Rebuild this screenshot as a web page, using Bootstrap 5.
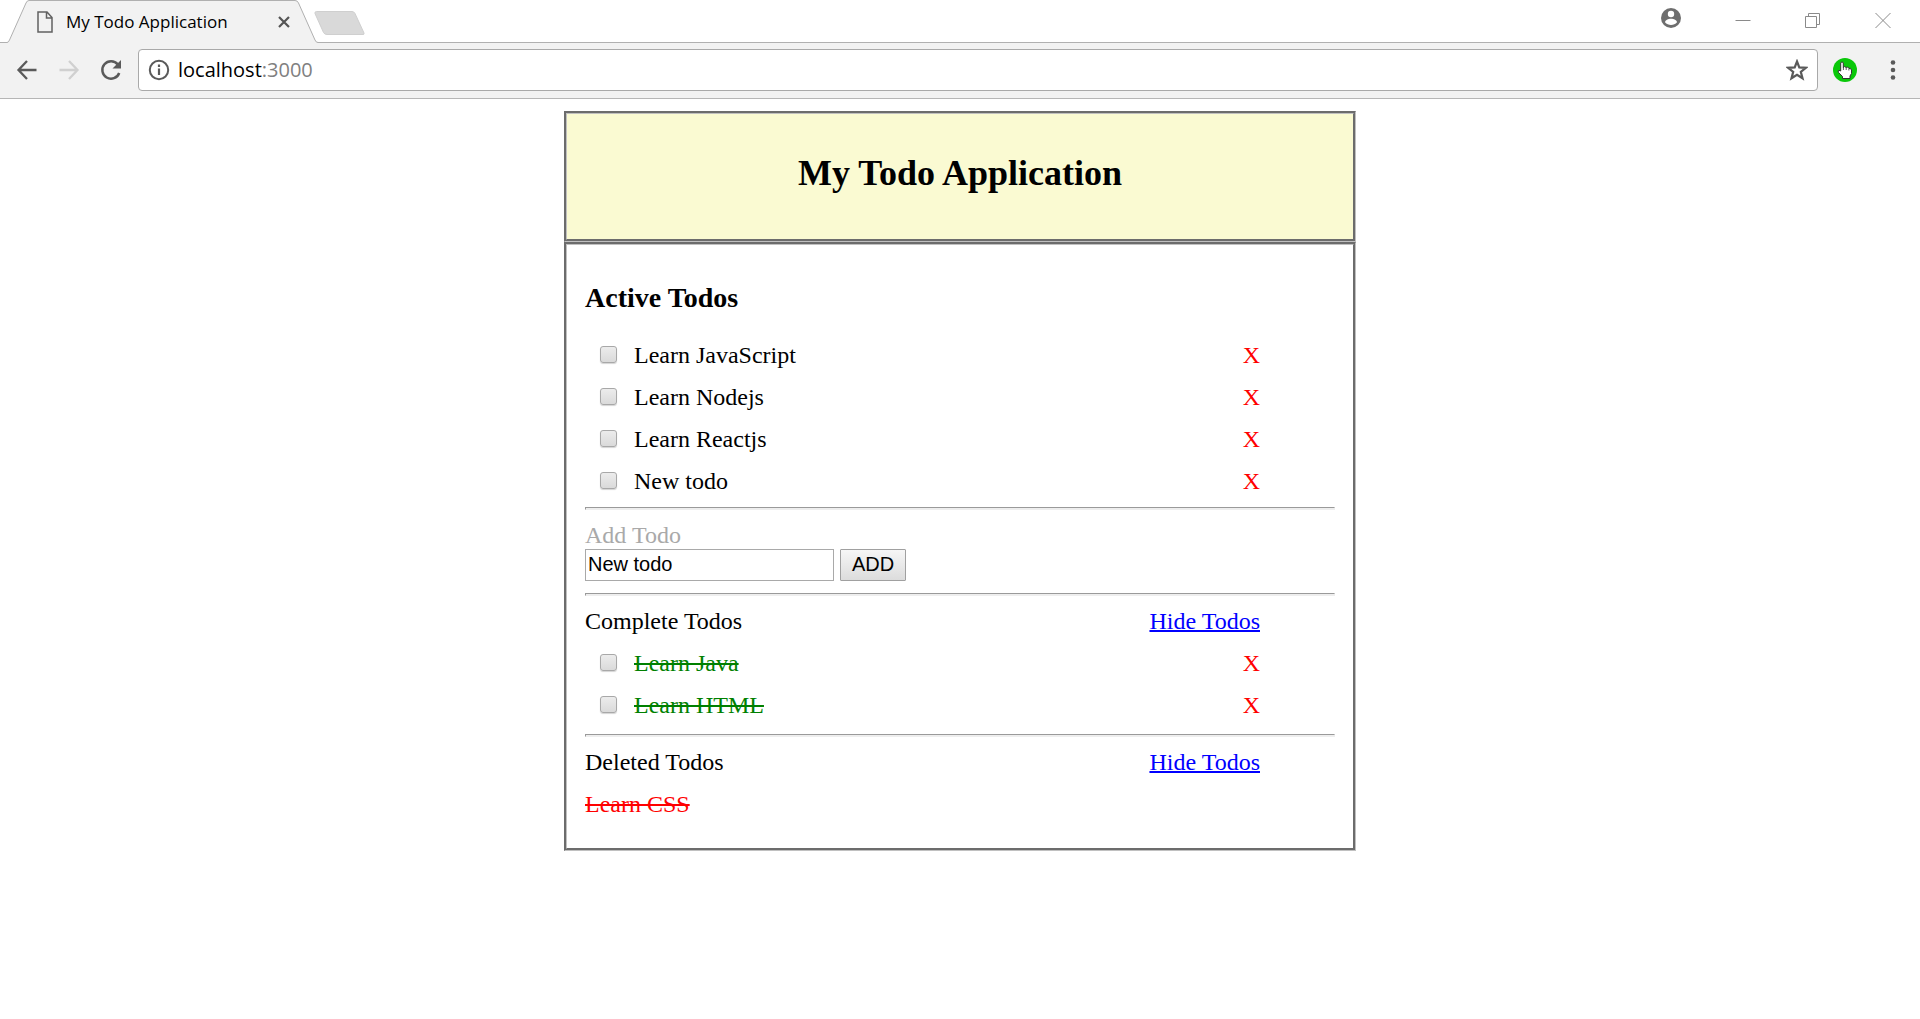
<!DOCTYPE html>
<html lang="en">
<head>
<meta charset="utf-8">
<meta name="viewport" content="width=device-width, initial-scale=1">
<title>My Todo Application</title>
<link href="https://cdn.jsdelivr.net/npm/bootstrap@5.3.0/dist/css/bootstrap.min.css" rel="stylesheet">
<style>
  body { font-family: "Liberation Serif", "Times New Roman", serif; font-size: 24px; line-height: 42px; color: #000; background: #fff; }
  svg { display: block; flex: none; }
  button { color: inherit; }

  /* browser window */
  .browser-ui { font-family: "Open Sans", "Segoe UI", sans-serif; line-height: 24px; }
  .tab-strip { height: 43px; border-bottom: 1px solid #b0b0b0; }
  .tab-item { width: 312px; height: 43px; margin-left: 7px; padding: 0 29px 0 30px; }
  .tab-shape { z-index: -1; }
  .tab-title { font-size: 17px; margin-left: 13px; }
  .new-tab { margin: 11px 0 0 -5px; }
  .window-buttons { padding: 8px 29px 0 0; gap: 54px; }
  .plain-btn { display: block; flex: none; padding: 0; border: 0; background: none; }
  .tool-row { height: 56px; padding: 0 19px 1px 16px; background: #f2f2f2; border-bottom: 1px solid #b6b6b6; }
  .nav-icons { gap: 20px; margin-right: 16px; }
  .address { height: 42px; padding: 0 9px; border: 1px solid #a9a9a9; border-radius: 4px; background: #fff; }
  .address-text { font-size: 20px; margin-left: 8px; }
  .address-port { color: #808080; }
  .tool-icons { gap: 28px; margin-left: 15px; }

  /* todo application */
  .todo-app { max-width: 792px; margin-top: 12px; }
  .groove-box { border: 3px groove #c0c0c0; }
  .app-head { padding: 38px 18px 45px; background: #fafad2; }
  .app-title { font-size: 36px; line-height: 42px; }
  .app-body { padding: 37px 18px 23px; }
  .list-title { font-size: 28px; line-height: 32px; margin-bottom: 20px; }
  .todo-row { width: 90%; }
  .todo-check { appearance: none; width: 17px; height: 17px; margin: 0 17px 2px 15px; border: 1px solid #a8a8a8; border-radius: 3px; background: linear-gradient(#ececec, #dadada); box-shadow: 0 1px 1px #d4d4d4; }
  .delete-btn { color: #f00; }
  .done-text { color: green; text-decoration: line-through; }
  .deleted-text { color: #f00; text-decoration: line-through; }
  .done-text, .deleted-text { text-decoration-thickness: 2px; }
  .toggle-link { color: #00f; text-decoration-thickness: 2px; }
  .rule { height: 3px; margin: 8px 0 4px; border: 1px solid #eee; border-top-color: #9a9a9a; border-left-color: #9a9a9a; background: #eee; opacity: 1; }
  .rule-before-form { margin: 5px 0 12px; }
  .rule-after-form { margin-top: 12px; }
  .add-label { line-height: 27px; color: #a9a9a9; }
  .add-form { gap: 6px; font-family: "Liberation Sans", Arial, sans-serif; font-size: 20px; line-height: 24px; }
  .add-input { width: 249px; height: 32px; padding: 0 2px 2px; border: 1px solid #a9a9a9; color: #000; }
  .add-btn { width: 66px; height: 32px; padding: 0 0 2px; border: 1px solid #a0a0a0; border-radius: 1px; background: linear-gradient(#f6f6f6, #dcdcdc); color: #000; }
</style>
<script src="https://cdn.jsdelivr.net/npm/bootstrap@5.3.0/dist/js/bootstrap.bundle.min.js"></script>
</head>
<body>
<header class="browser-ui">
  <div class="tab-strip d-flex align-items-start">
    <div class="tab-item position-relative z-0 d-flex align-items-center">
      <svg class="tab-shape position-absolute top-0 start-0" width="312" height="43" aria-hidden="true"><path d="M0 42.500Q1.500 42.500 2.500 40L19 3Q20 .5 22 .5H288Q290.500 .5 291.500 3L308 40Q309 42.500 311 42.500H312V43H0Z" fill="#f2f2f2"/><path d="M0 42.500Q1.500 42.500 2.500 40L19 3Q20 .5 22 .5H288Q290.500 .5 291.500 3L308 40Q309 42.500 311 42.500H312" fill="none" stroke="#b0b0b0"/></svg>
      <svg width="16" height="22" viewBox="0 0 16 22" aria-hidden="true"><path d="M1 1H10L15 6.500V21H1ZM9.500 1V7H15" fill="none" stroke="#616161" stroke-width="1.500"/></svg>
      <span class="tab-title">My Todo Application</span>
      <button class="plain-btn ms-auto" type="button" aria-label="Close tab"><svg width="12" height="12" viewBox="0 0 12 12"><path d="M1 1L11 11M11 1L1 11" stroke="#555" stroke-width="2.200"/></svg></button>
    </div>
    <button class="plain-btn new-tab" type="button" aria-label="New tab"><svg width="51" height="25" viewBox="0 0 51 25"><path d="M2.500 .5H38Q40 .5 41 2.500L50 22Q50.500 23.500 49 23.500H13Q10.500 23.500 9.500 21.500L1 2.500Q.500 .5 2.500 .5Z" fill="#d9d9d9" stroke="#cfcfcf"/></svg></button>
    <div class="window-buttons d-flex align-items-start ms-auto">
      <button class="plain-btn" type="button" aria-label="Profile"><svg width="20" height="20" viewBox="0 0 20 20"><circle cx="10" cy="10" r="10" fill="#6e6e6e"/><circle cx="10" cy="6" r="3.200" fill="#fff"/><path d="M4 14.300C4.500 9.500 15.500 9.500 16 14.300C13 18 7 18 4 14.300Z" fill="#fff"/></svg></button>
      <button class="plain-btn" type="button" aria-label="Minimize"><svg width="16" height="21" viewBox="0 0 16 21"><path d="M.5 12.500H15.500" stroke="#8a8a8a"/></svg></button>
      <button class="plain-btn" type="button" aria-label="Restore"><svg width="16" height="21" viewBox="0 0 16 21"><path d="M.5 8.500H11.500V19.500H.5ZM3.500 8.500V5.500H14.500V16.500H11.500" fill="none" stroke="#8a8a8a"/></svg></button>
      <button class="plain-btn" type="button" aria-label="Close"><svg width="16" height="21" viewBox="0 0 16 21"><path d="M.5 5L15.500 20M15.500 5L.5 20" stroke="#8a8a8a"/></svg></button>
    </div>
  </div>
  <div class="tool-row d-flex align-items-center">
    <div class="nav-icons d-flex">
      <button class="plain-btn" type="button" aria-label="Back"><svg width="22" height="22" viewBox="0 0 22 22"><path d="M20.500 11H3M11 2L2.500 11L11 20" fill="none" stroke="#5a5a5a" stroke-width="2.300"/></svg></button>
      <button class="plain-btn" type="button" aria-label="Forward" disabled><svg width="22" height="22" viewBox="0 0 22 22"><path d="M1.500 11H19M11 2L19.500 11L11 20" fill="none" stroke="#d0d0d0" stroke-width="2.300"/></svg></button>
      <button class="plain-btn" type="button" aria-label="Reload"><svg width="22" height="22" viewBox="0 0 22 22"><path d="M17.800 5.500A8.700 8.700 0 1 0 19.200 14" fill="none" stroke="#5a5a5a" stroke-width="2.500"/><path d="M21 1V9.500H12.500Z" fill="#5a5a5a"/></svg></button>
    </div>
    <div class="address d-flex align-items-center flex-grow-1">
      <svg width="22" height="22" viewBox="0 0 22 22" aria-hidden="true"><circle cx="11" cy="11" r="9.200" fill="none" stroke="#5a5a5a" stroke-width="2"/><path d="M11 9.500V16M11 5.500V8" stroke="#5a5a5a" stroke-width="2.200"/></svg>
      <span class="address-text">localhost<span class="address-port">:3000</span></span>
      <button class="plain-btn ms-auto" type="button" aria-label="Bookmark"><svg width="22" height="22" viewBox="0 0 22 22"><path d="M11 2.500L13.300 8.400L19.800 8.800L14.800 12.900L16.500 19.200L11 15.700L5.500 19.200L7.200 12.900L2.200 8.800L8.700 8.400Z" fill="none" stroke="#5a5a5a" stroke-width="2.200"/></svg></button>
    </div>
    <div class="tool-icons d-flex align-items-center">
      <button class="plain-btn" type="button" aria-label="Extension"><svg width="24" height="24" viewBox="0 0 24 24"><circle cx="12" cy="12" r="12" fill="#0ac80a"/><path d="M7.700 4.800Q9 3 10.300 4.800V9.500L11.500 8.600L13.300 9.500L14.800 9L16 10.500L17.300 10.300L18.500 12V15.500L17 18V20.500H9.500V18.500L5.500 14.500Q4.500 12.500 6 12.300L7.700 13Z" fill="#fff" stroke="#333" stroke-width="1"/><path d="M10.400 9V12M13.200 9.500V12M15.900 10.500V12.500" stroke="#333" stroke-width=".8"/></svg></button>
      <button class="plain-btn" type="button" aria-label="Menu"><svg width="16" height="22" viewBox="0 0 16 22" fill="#5a5a5a"><circle cx="8" cy="3.500" r="2.300"/><circle cx="8" cy="11" r="2.300"/><circle cx="8" cy="18.500" r="2.300"/></svg></button>
    </div>
  </div>
</header>

<main class="todo-app w-100 mx-auto">
  <div class="groove-box app-head text-center">
    <h1 class="app-title fw-bold m-0">My Todo Application</h1>
  </div>
  <div class="groove-box app-body">
    <h2 class="list-title fw-bold">Active Todos</h2>
    <ul class="list-unstyled m-0">
      <li class="todo-row d-flex align-items-center"><input class="todo-check" type="checkbox" id="todo-1"><label for="todo-1">Learn JavaScript</label><button class="plain-btn delete-btn ms-auto" type="button">X</button></li>
      <li class="todo-row d-flex align-items-center"><input class="todo-check" type="checkbox" id="todo-2"><label for="todo-2">Learn Nodejs</label><button class="plain-btn delete-btn ms-auto" type="button">X</button></li>
      <li class="todo-row d-flex align-items-center"><input class="todo-check" type="checkbox" id="todo-3"><label for="todo-3">Learn Reactjs</label><button class="plain-btn delete-btn ms-auto" type="button">X</button></li>
      <li class="todo-row d-flex align-items-center"><input class="todo-check" type="checkbox" id="todo-4"><label for="todo-4">New todo</label><button class="plain-btn delete-btn ms-auto" type="button">X</button></li>
    </ul>
    <hr class="rule rule-before-form">
    <form>
      <label class="add-label d-block" for="new-todo">Add Todo</label>
      <div class="add-form d-flex">
        <input class="add-input" type="text" id="new-todo" value="New todo">
        <button class="add-btn" type="button">ADD</button>
      </div>
    </form>
    <hr class="rule rule-after-form">
    <div class="todo-row d-flex justify-content-between"><span>Complete Todos</span><a class="toggle-link" href="#">Hide Todos</a></div>
    <ul class="list-unstyled m-0">
      <li class="todo-row d-flex align-items-center"><input class="todo-check" type="checkbox" id="done-1"><label class="done-text" for="done-1">Learn Java</label><button class="plain-btn delete-btn ms-auto" type="button">X</button></li>
      <li class="todo-row d-flex align-items-center"><input class="todo-check" type="checkbox" id="done-2"><label class="done-text" for="done-2">Learn HTML</label><button class="plain-btn delete-btn ms-auto" type="button">X</button></li>
    </ul>
    <hr class="rule">
    <div class="todo-row d-flex justify-content-between"><span>Deleted Todos</span><a class="toggle-link" href="#">Hide Todos</a></div>
    <ul class="list-unstyled m-0">
      <li class="deleted-text">Learn CSS</li>
    </ul>
  </div>
</main>
</body>
</html>
